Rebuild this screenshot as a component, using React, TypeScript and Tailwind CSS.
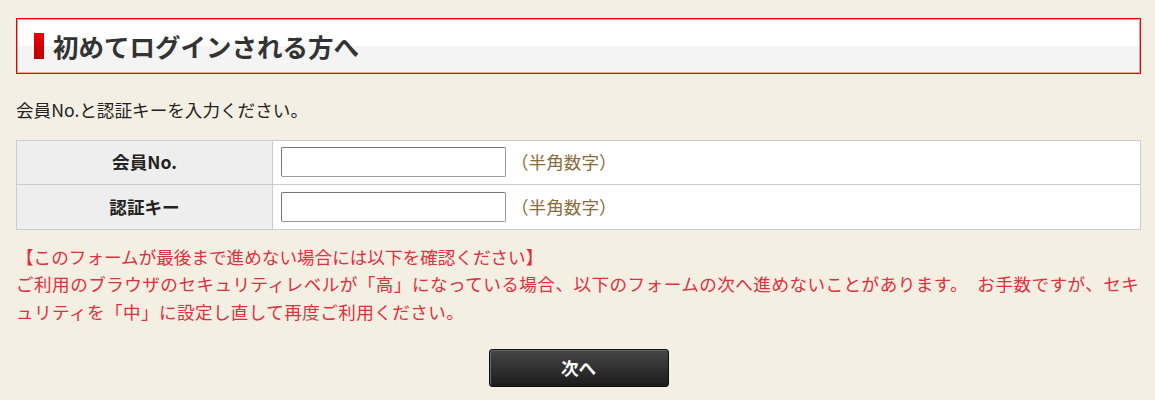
import React from "react";

const jp = "font-['Meiryo','Noto_Sans_CJK_JP',sans-serif]";

const Row = ({ label, last }: { label: string; last?: boolean }) => (
  <div className={last ? "flex h-[44px]" : "flex h-[44px] border-b border-[#cccccc]"}>
    <div className="w-[256px] flex items-center justify-center bg-[#eeeeee] border-r border-[#cccccc] font-bold text-[#222]">
      {label}
    </div>
    <div className="flex-1 flex items-center bg-white pl-[8px]">
      <input
        type="text"
        className="w-[225px] h-[30px] rounded-[2px] border border-[#999] border-t-[#777] border-l-[#777] bg-white px-1 outline-none"
      />
      <span className="ml-[5px] text-[#8c6a3a]">（半角数字）</span>
    </div>
  </div>
);

export default function App() {
  return (
    <div className={`min-h-[400px] bg-[#f4efe3] ${jp} text-[17.6px] leading-[27.5px] text-[#333]`}>
      <div className="ml-4 w-[1125px] pt-[18px]">
        <div className="h-[56px] border border-[#e60000] shadow-[inset_0_0_0_1px_#f6a0a0] bg-[linear-gradient(#ffffff_50%,#f4f4f4_50%)] flex items-center pl-[17px]">
          <span className="w-[10px] h-[26px] bg-[linear-gradient(#f00000,#b80000)]"></span>
          <h1 className="ml-[9px] text-[25.5px] leading-none font-bold text-[#333]">
            初めてログインされる方へ
          </h1>
        </div>

        <p className="mt-[22px] text-[#222]">会員No.と認証キーを入力ください。</p>

        <div className="mt-[16px] border border-[#cccccc]">
          <Row label="会員No." />
          <Row label="認証キー" last />
        </div>

        <p className="mt-[13px] text-[#e0303c]">
          【このフォームが最後まで進めない場合には以下を確認ください】
          <br />
          <span className="tracking-[0.45px]">
            ご利用のブラウザのセキュリティレベルが「高」になっている場合、以下のフォームの次へ進めないことがあります。　お手数ですが、セキ
          </span>
          <br />
          <span className="tracking-[0.4px]">ュリティを「中」に設定し直して再度ご利用ください。</span>
        </p>

        <div className="mt-[24px] flex justify-center">
          <button className="w-[180px] h-[38px] rounded-[3px] border border-[#111] bg-[linear-gradient(#464646,#1c1c1c)] shadow-[inset_1px_1px_0_#666] text-white font-bold text-[17.6px]">
            次へ
          </button>
        </div>
      </div>
    </div>
  );
}
